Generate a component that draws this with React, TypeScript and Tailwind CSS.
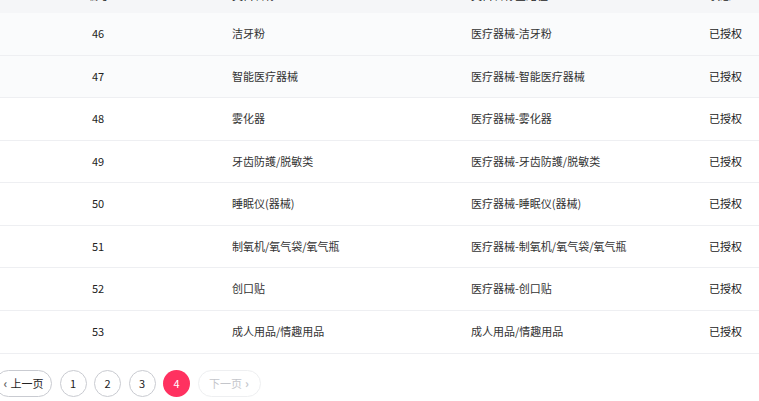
import React from 'react';

const rows = [
  { id: 46, name: '洁牙粉', path: '医疗器械-洁牙粉', tint: true },
  { id: 47, name: '智能医疗器械', path: '医疗器械-智能医疗器械', tint: true },
  { id: 48, name: '雾化器', path: '医疗器械-雾化器' },
  { id: 49, name: '牙齿防護/脱敏类', path: '医疗器械-牙齿防護/脱敏类' },
  { id: 50, name: '睡眠仪(器械)', path: '医疗器械-睡眠仪(器械)' },
  { id: 51, name: '制氧机/氧气袋/氧气瓶', path: '医疗器械-制氧机/氧气袋/氧气瓶' },
  { id: 52, name: '创口贴', path: '医疗器械-创口贴' },
  { id: 53, name: '成人用品/情趣用品', path: '成人用品/情趣用品' },
];

const grid = 'grid grid-cols-[196px_239px_238px_1fr] items-center';

export default function App() {
  return (
    <div
      className="w-[759px] h-[401px] overflow-hidden bg-white text-[11px] text-[#333]"
      style={{ fontFamily: '"Noto Sans CJK SC", "Liberation Sans", sans-serif' }}
    >
      {/* table */}
      <div className="-mt-[23px]">
        <div className={`${grid} h-[36px] bg-[#f5f6f8] text-[#222]`}>
          <div className="text-center">编号</div>
          <div className="pl-9">类目名称</div>
          <div className="pl-9">类目名称全路径</div>
          <div className="pl-9">状态</div>
        </div>
        {rows.map((r) => (
          <div
            key={r.id}
            className={`${grid} h-[42.57px] border-b border-[#eeeff2] ${r.tint ? 'bg-[#fafbfc]' : 'bg-white'}`}
          >
            <div className="text-center text-[#222] -mt-[1px]">{r.id}</div>
            <div className="pl-9 -mt-[1px]">{r.name}</div>
            <div className="pl-9 -mt-[1px]">{r.path}</div>
            <div className="pl-9 text-[#222] -mt-[1px]">已授权</div>
          </div>
        ))}
      </div>

      {/* pagination */}
      <div className="mt-[16px] -ml-[5px] flex items-center gap-[7.5px]">
        <button className="h-[27px] w-[57px] rounded-full border border-[#c9cbd1] flex items-center justify-center gap-[3px] text-[#222]">
          <span className="text-[#666] text-[12px] leading-none font-bold">‹</span>
          <span>上一页</span>
        </button>
        {[1, 2, 3].map((n) => (
          <button
            key={n}
            className="h-[27px] w-[27px] rounded-full border border-[#c9cbd1] flex items-center justify-center text-[#222]"
          >
            {n}
          </button>
        ))}
        <button className="h-[27px] w-[27px] rounded-full bg-[#ff3160] flex items-center justify-center text-white">
          4
        </button>
        <button className="h-[27px] w-[63px] rounded-full border border-[#eeeff1] flex items-center justify-center gap-[3px] text-[#c4c6cb]">
          <span>下一页</span>
          <span className="text-[12px] leading-none font-bold">›</span>
        </button>
      </div>
    </div>
  );
}
